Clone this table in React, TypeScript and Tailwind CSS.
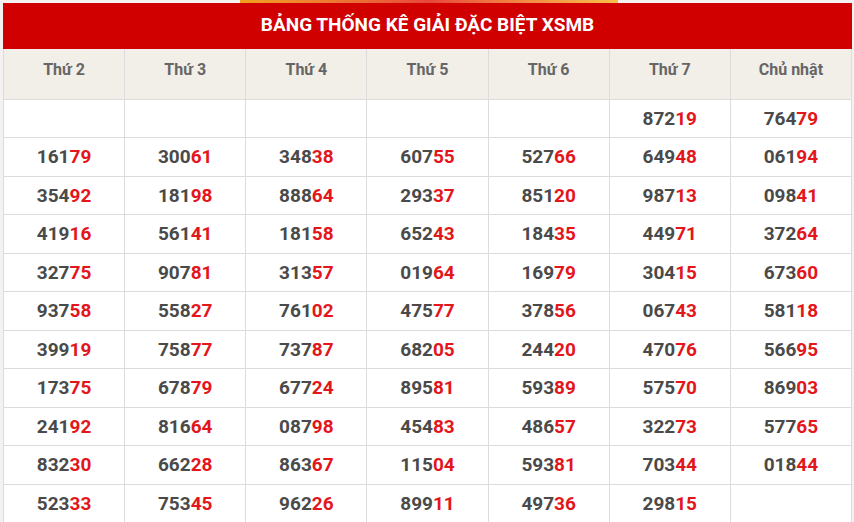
const days = ["Thứ 2", "Thứ 3", "Thứ 4", "Thứ 5", "Thứ 6", "Thứ 7", "Chủ nhật"];

const rows = [
  ["", "", "", "", "", "87219", "76479"],
  ["16179", "30061", "34838", "60755", "52766", "64948", "06194"],
  ["35492", "18198", "88864", "29337", "85120", "98713", "09841"],
  ["41916", "56141", "18158", "65243", "18435", "44971", "37264"],
  ["32775", "90781", "31357", "01964", "16979", "30415", "67360"],
  ["93758", "55827", "76102", "47577", "37856", "06743", "58118"],
  ["39919", "75877", "73787", "68205", "24420", "47076", "56695"],
  ["17375", "67879", "67724", "89581", "59389", "57570", "86903"],
  ["24192", "81664", "08798", "45483", "48657", "32273", "57765"],
  ["83230", "66228", "86367", "11504", "59381", "70344", "01844"],
  ["52333", "75345", "96226", "89911", "49736", "29815", ""],
];

function Prize({ value }: { value: string }) {
  if (!value) return null;
  return (
    <span>
      {value.slice(0, 3)}
      <span className="text-[#e3161b]">{value.slice(3)}</span>
    </span>
  );
}

export default function App() {
  return (
    <div className="h-[522px] w-[854px] overflow-hidden bg-[#f4f1f1] pl-[3px] pr-[2px] font-['Roboto',sans-serif]">
      <div className="flex h-[3px]">
        <div className="ml-[237px] h-[3px] w-[378px] bg-gradient-to-r from-[#f0a020] via-[#e8463c] to-[#f6c04a]" />
      </div>
      <div className="bg-white">
        <div className="flex h-[46px] items-center justify-center bg-[#d10000] pb-[2px] text-[19px] font-bold text-white">
          BẢNG THỐNG KÊ GIẢI ĐẶC BIỆT XSMB
        </div>
        <table className="w-full table-fixed border-collapse">
          <thead>
            <tr className="h-[50px] bg-[#f2eee8]">
              {days.map((d) => (
                <th key={d} className="border border-t-0 border-[#dcdcdc] pb-[7px] text-[16px] font-bold text-[#666]">
                  {d}
                </th>
              ))}
            </tr>
          </thead>
          <tbody>
            {rows.map((row, i) => (
              <tr key={i} className="h-[38.5px]">
                {row.map((v, j) => (
                  <td key={j} className="border border-[#dcdcdc] text-center text-[19px] font-bold leading-none text-[#4a4a4a]">
                    <Prize value={v} />
                  </td>
                ))}
              </tr>
            ))}
          </tbody>
        </table>
      </div>
    </div>
  );
}
